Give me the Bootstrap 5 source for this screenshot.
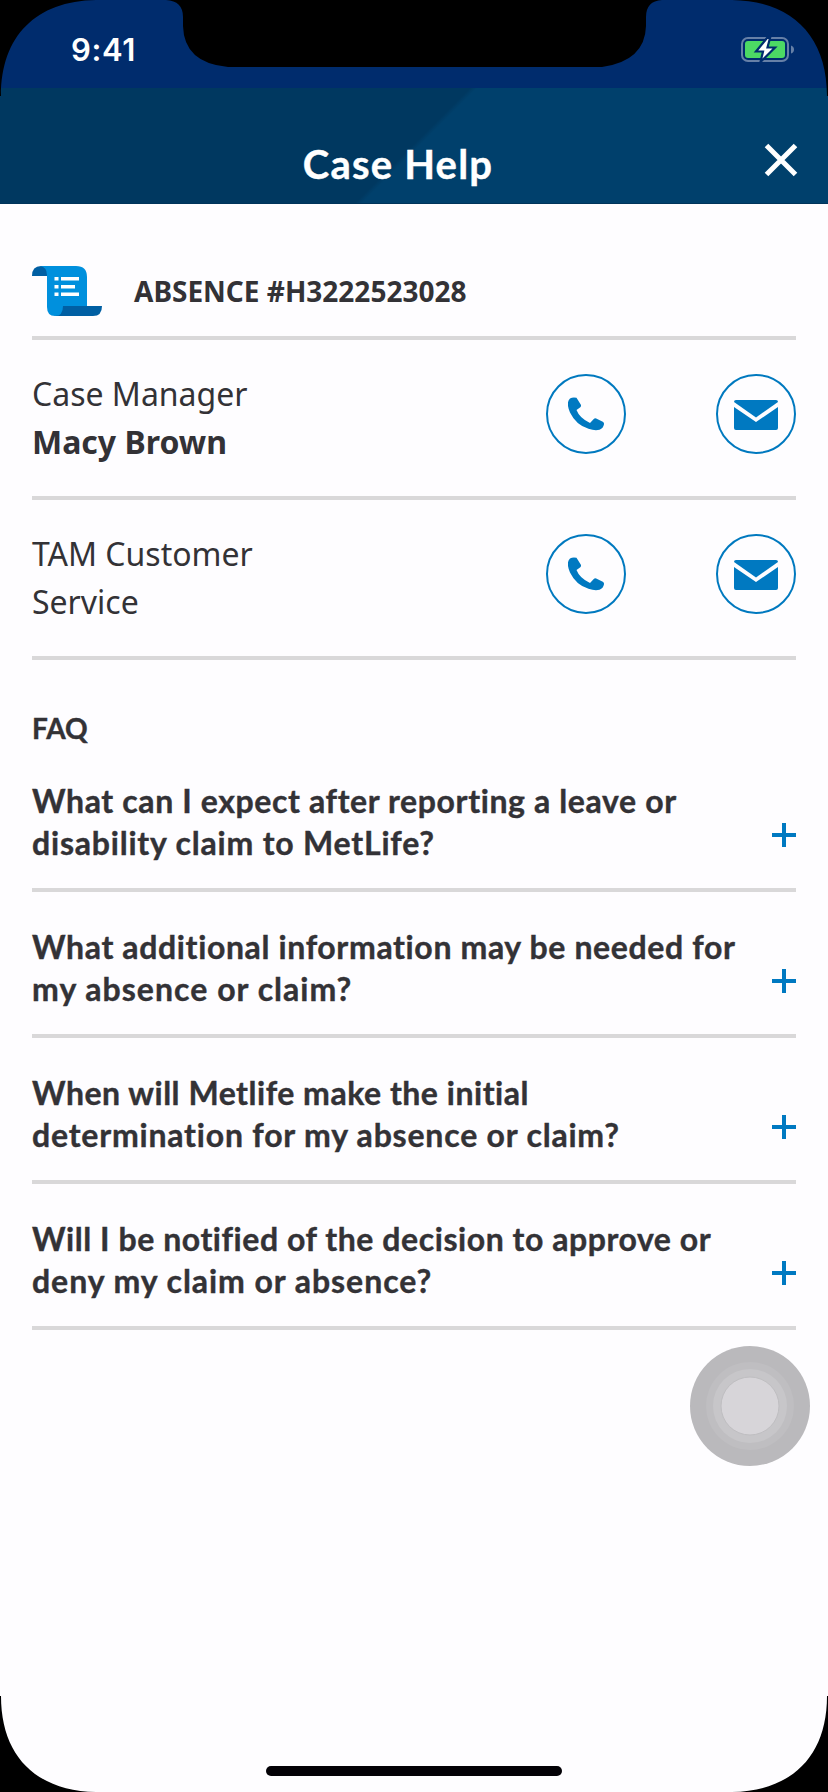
<!DOCTYPE html>
<html lang="en">
<head>
<meta charset="utf-8">
<meta name="viewport" content="width=device-width, initial-scale=1">
<title>Case Help</title>
<link rel="stylesheet" href="https://cdn.jsdelivr.net/npm/bootstrap@5.3.0/dist/css/bootstrap.min.css">
<style>
body { background: #fefdff; color: #333236; font-family: "Noto Sans", sans-serif; }
svg { display: block; flex: none; }
.screen { width: 828px; height: 1792px; }
.status-bar { height: 88px; background: #002c6d; padding: 10px 33px 0 71px; }
.clock { font: 600 31px/1 Inter, sans-serif; letter-spacing: .6px; }
.title-bar { height: 116px; padding: 36px 30px 0 32px; background: linear-gradient(135deg, #003860 0, #003860 calc(50% - 1px), #00406c calc(50% + 4px)); border-bottom: 1px solid #00345a; }
.title-bar h1 { font: 700 40px/80px Lato, sans-serif; letter-spacing: 1.2px; -webkit-text-stroke: .4px; }
.close-btn { width: 34px; height: 72px; }
.rule { border-bottom: 4px solid #d9d8d9; }
.page-body { width: 764px; }
.case-id { height: 136px; padding-top: 42px; gap: 32px; }
.case-id h2 { font-size: 28px; line-height: 40px; font-weight: 700; }
.contact { height: 160px; padding-top: 30px; font-size: 32px; line-height: 48px; }
.contact-name { width: 260px; }
.round-btn { width: 80px; height: 80px; border: 2px solid #0079bf; color: #0079c1; margin-top: 4px; }
.actions { gap: 90px; }
.faq-head { font: 700 28px/36px Lato, sans-serif; height: 86px; padding-top: 50px; margin: 0; -webkit-text-stroke: .4px; }
.faq-row { height: 146px; padding-top: 34px; font: 700 32px/42px Lato, sans-serif; white-space: nowrap; -webkit-text-stroke: .4px; }
.faq-row svg { margin-top: 43px; }
.l1 { letter-spacing: .62px; }
.l2 { letter-spacing: .8px; }
.l3 { letter-spacing: .64px; }
.l4 { letter-spacing: 1.03px; }
.l5 { letter-spacing: .52px; }
.l6 { letter-spacing: .8px; }
.l7 { letter-spacing: .56px; }
.l8 { letter-spacing: .95px; }
.touch-dot { right: 18px; top: 1346px; }
.home-bar { left: 266px; top: 1766px; width: 296px; height: 10px; background: #030106; }
</style>
</head>
<body>
<div class="screen position-relative overflow-hidden">
  <header class="text-white">
    <div class="status-bar d-flex justify-content-between align-items-center">
      <span class="clock">9:41</span>
      <svg width="54" height="28" viewBox="0 -1 54 28">
        <rect x="1" y="2" width="46" height="23" rx="6" fill="none" stroke="#6680a7" stroke-width="2"/>
        <rect x="4" y="5" width="40" height="17" rx="3" fill="#4cd964"/>
        <path d="M50 9.500q3 1 3 4t-3 4z" fill="#6680a7"/>
        <path d="M26 2 15 15.500h7L19.500 26 34 11.500h-7.500L29 2z" fill="#fff" stroke="#002c6d" stroke-width="2.200"/>
      </svg>
    </div>
    <div class="title-bar d-flex">
      <h1 class="flex-grow-1 text-center m-0">Case Help</h1>
      <button class="close-btn btn p-0 border-0" aria-label="Close">
        <svg width="34" height="34" viewBox="0 0 34 34"><path d="M2.500 2.500 31.500 31.500M31.500 2.500 2.500 31.500" stroke="#fff" stroke-width="5"/></svg>
      </button>
    </div>
  </header>

  <main class="page-body mx-auto">
    <section class="case-id rule d-flex align-items-center">
      <svg width="70" height="50" viewBox="0 0 70 50">
        <path d="M0 10Q0 0 9 0h8v10z" fill="#005fa3"/>
        <path d="M29 40h41q0 10-9 10H23z" fill="#005fa3"/>
        <path d="M8 0h36q11 0 11 11v29H31q0 10-8 10-8 0-8-9V9Q15 1 8 0z" fill="#0090dd"/>
        <path d="M22.500 11h4v3.500h-4zm6.500 0h18v3.500H29zM22.500 19h4v3.500h-4zm6.500 0h14v3.500H29zM22.500 26.500h4V30h-4zm6.500 0h18V30H29z" fill="#fff"/>
      </svg>
      <h2 class="m-0">ABSENCE #H3222523028</h2>
    </section>

    <section class="contact rule d-flex justify-content-between">
      <div class="contact-name">Case Manager<br><strong>Macy Brown</strong></div>
      <div class="actions d-flex">
        <button class="round-btn btn rounded-circle p-0 d-flex align-items-center justify-content-center" aria-label="Call">
          <svg width="36" height="34" viewBox="0 0 36 34"><path d="M2 1.500Q5-.3 8.500.8L13 8q.2 1.500-1 2.500L8.500 13q3 8 13.500 13l4-4.300q1-.9 2.200-.3l6.600 3.300q1.400.8 1.200 2.600-.7 4-4.500 5.500-4.500 1.300-11-1Q8 28 2 15.500-2.300 5.500 2 1.500z" fill="currentColor"/></svg>
        </button>
        <button class="round-btn btn rounded-circle p-0 d-flex align-items-center justify-content-center" aria-label="Email">
          <svg width="44" height="32" viewBox="0 -2 44 32"><path d="M2 0h40q2 0 2 2L22 17.500 0 2Q0 0 2 0z" fill="currentColor"/><path d="M0 7l22 15L44 7v21q0 2-2 2H2q-2 0-2-2z" fill="currentColor"/></svg>
        </button>
      </div>
    </section>

    <section class="contact rule d-flex justify-content-between">
      <div class="contact-name">TAM Customer Service</div>
      <div class="actions d-flex">
        <button class="round-btn btn rounded-circle p-0 d-flex align-items-center justify-content-center" aria-label="Call">
          <svg width="36" height="34" viewBox="0 0 36 34"><path d="M2 1.500Q5-.3 8.500.8L13 8q.2 1.500-1 2.500L8.500 13q3 8 13.500 13l4-4.300q1-.9 2.200-.3l6.600 3.300q1.400.8 1.200 2.600-.7 4-4.500 5.500-4.500 1.300-11-1Q8 28 2 15.500-2.300 5.500 2 1.500z" fill="currentColor"/></svg>
        </button>
        <button class="round-btn btn rounded-circle p-0 d-flex align-items-center justify-content-center" aria-label="Email">
          <svg width="44" height="32" viewBox="0 -2 44 32"><path d="M2 0h40q2 0 2 2L22 17.500 0 2Q0 0 2 0z" fill="currentColor"/><path d="M0 7l22 15L44 7v21q0 2-2 2H2q-2 0-2-2z" fill="currentColor"/></svg>
        </button>
      </div>
    </section>

    <section>
      <h2 class="faq-head">FAQ</h2>
      <div class="faq-row rule d-flex justify-content-between">
        <div><span class="l1">What can I expect after reporting a leave or</span><br><span class="l2">disability claim to MetLife?</span></div>
        <svg width="24" height="24"><path d="M12 0v24M0 12h24" stroke="#0079c1" stroke-width="4"/></svg>
      </div>
      <div class="faq-row rule d-flex justify-content-between">
        <div><span class="l3">What additional information may be needed for</span><br><span class="l4">my absence or claim?</span></div>
        <svg width="24" height="24"><path d="M12 0v24M0 12h24" stroke="#0079c1" stroke-width="4"/></svg>
      </div>
      <div class="faq-row rule d-flex justify-content-between">
        <div><span class="l5">When will Metlife make the initial</span><br><span class="l6">determination for my absence or claim?</span></div>
        <svg width="24" height="24"><path d="M12 0v24M0 12h24" stroke="#0079c1" stroke-width="4"/></svg>
      </div>
      <div class="faq-row rule d-flex justify-content-between">
        <div><span class="l7">Will I be notified of the decision to approve or</span><br><span class="l8">deny my claim or absence?</span></div>
        <svg width="24" height="24"><path d="M12 0v24M0 12h24" stroke="#0079c1" stroke-width="4"/></svg>
      </div>
    </section>
  </main>

  <!-- assistive touch button -->
  <svg class="touch-dot position-absolute" width="120" height="120" viewBox="0 0 120 120">
    <circle cx="60" cy="60" r="60" fill="#bab9bc"/>
    <circle cx="60" cy="60" r="44" fill="#bfbec1"/>
    <circle cx="60" cy="60" r="37" fill="#c7c6c9"/>
    <circle cx="60" cy="60" r="29" fill="#d7d5d9" stroke="#bfbec1"/>
  </svg>
  <div class="home-bar position-absolute rounded-pill"></div>

  <!-- device bezel: rounded corners and notch -->
  <svg class="position-absolute top-0 start-0 pe-none" width="828" height="1792" viewBox="0 0 828 1792">
    <path d="M0 0H96C36 1 1 36 1 96H0zM828 0H732C792 1 827 36 827 96h1zM0 1792h96C36 1791 1 1756 1 1696H0zM828 1792h-96c60-1 95-36 95-96h1z"/>
    <path d="M166 0Q183 1 183 17V26Q184 63 228 67H602Q645 61 646 26V17Q646 1 662 0z"/>
  </svg>
</div>
<script src="https://cdn.jsdelivr.net/npm/bootstrap@5.3.0/dist/js/bootstrap.bundle.min.js"></script>
</body>
</html>
